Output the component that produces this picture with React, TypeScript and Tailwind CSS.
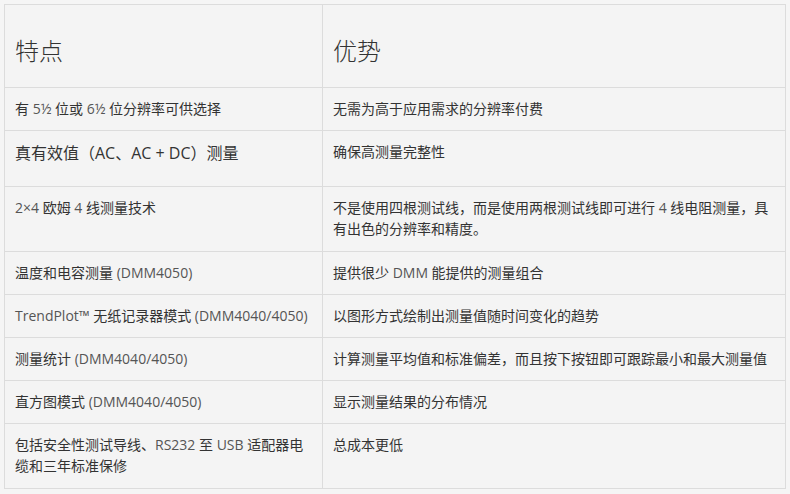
import React from "react";

const L = ({ children }: { children: React.ReactNode }) => (
  <span className="text-[#555]">{children}</span>
);

type Row = { h: string; left: React.ReactNode; right: React.ReactNode; leftCls?: string };

const rows: Row[] = [
  {
    h: "h-[43px]",
    left: (
      <>
        有 <L>5½</L> 位或 <L>6½</L> 位分辨率可供选择
      </>
    ),
    right: "无需为高于应用需求的分辨率付费",
  },
  {
    h: "h-[56px]",
    leftCls: "text-[16px] leading-[24px]",
    left: "真有效值（AC、AC + DC）测量",
    right: "确保高测量完整性",
  },
  {
    h: "h-[65px]",
    left: (
      <>
        <L>2×4</L> 欧姆 <L>4</L> 线测量技术
      </>
    ),
    right: (
      <>
        不是使用四根测试线，而是使用两根测试线即可进行 <L>4</L> 线电阻测量，具
        <br />
        有出色的分辨率和精度。
      </>
    ),
  },
  {
    h: "h-[43px]",
    left: (
      <>
        温度和电容测量 <L>(DMM4050)</L>
      </>
    ),
    right: (
      <>
        提供很少 <L>DMM</L> 能提供的测量组合
      </>
    ),
  },
  {
    h: "h-[43px]",
    left: (
      <>
        <L>TrendPlot™</L> 无纸记录器模式 <L>(DMM4040/4050)</L>
      </>
    ),
    right: "以图形方式绘制出测量值随时间变化的趋势",
  },
  {
    h: "h-[43px]",
    left: (
      <>
        测量统计 <L>(DMM4040/4050)</L>
      </>
    ),
    right: "计算测量平均值和标准偏差，而且按下按钮即可跟踪最小和最大测量值",
  },
  {
    h: "h-[43px]",
    left: (
      <>
        直方图模式 <L>(DMM4040/4050)</L>
      </>
    ),
    right: "显示测量结果的分布情况",
  },
  {
    h: "h-[64px]",
    left: (
      <>
        包括安全性测试导线、<L>RS232</L> 至 <L>USB</L> 适配器电
        <br />
        缆和三年标准保修
      </>
    ),
    right: "总成本更低",
  },
];

export default function App() {
  return (
    <div
      className="w-[790px] h-[494px] bg-[#f5f5f5] pt-[4px] pl-[4px] text-[#333]"
      style={{ fontFamily: '"Open Sans", "Noto Sans CJK SC", sans-serif' }}
    >
      <div className="w-[782px] border border-[#dcdcdc] bg-[#f4f4f4]">
        <div className="flex h-[83px] border-b border-[#dcdcdc]">
          <div className="w-[318px] border-r border-[#dcdcdc] pl-[10px] pt-[28px] text-[24px] leading-[36px] font-light text-[#333]">
            特点
          </div>
          <div className="flex-1 pl-[10px] pt-[28px] text-[24px] leading-[36px] font-light text-[#333]">
            优势
          </div>
        </div>
        {rows.map((r, i) => (
          <div
            key={i}
            className={`flex ${r.h} ${i < rows.length - 1 ? "border-b border-[#dcdcdc]" : ""}`}
          >
            <div
              className={`w-[318px] border-r border-[#dcdcdc] pl-[10px] pt-[10px] ${
                r.leftCls ?? "text-[14px] leading-[21px]"
              }`}
            >
              {r.left}
            </div>
            <div className="flex-1 pl-[10px] pt-[10px] text-[14px] leading-[21px]">{r.right}</div>
          </div>
        ))}
      </div>
    </div>
  );
}
